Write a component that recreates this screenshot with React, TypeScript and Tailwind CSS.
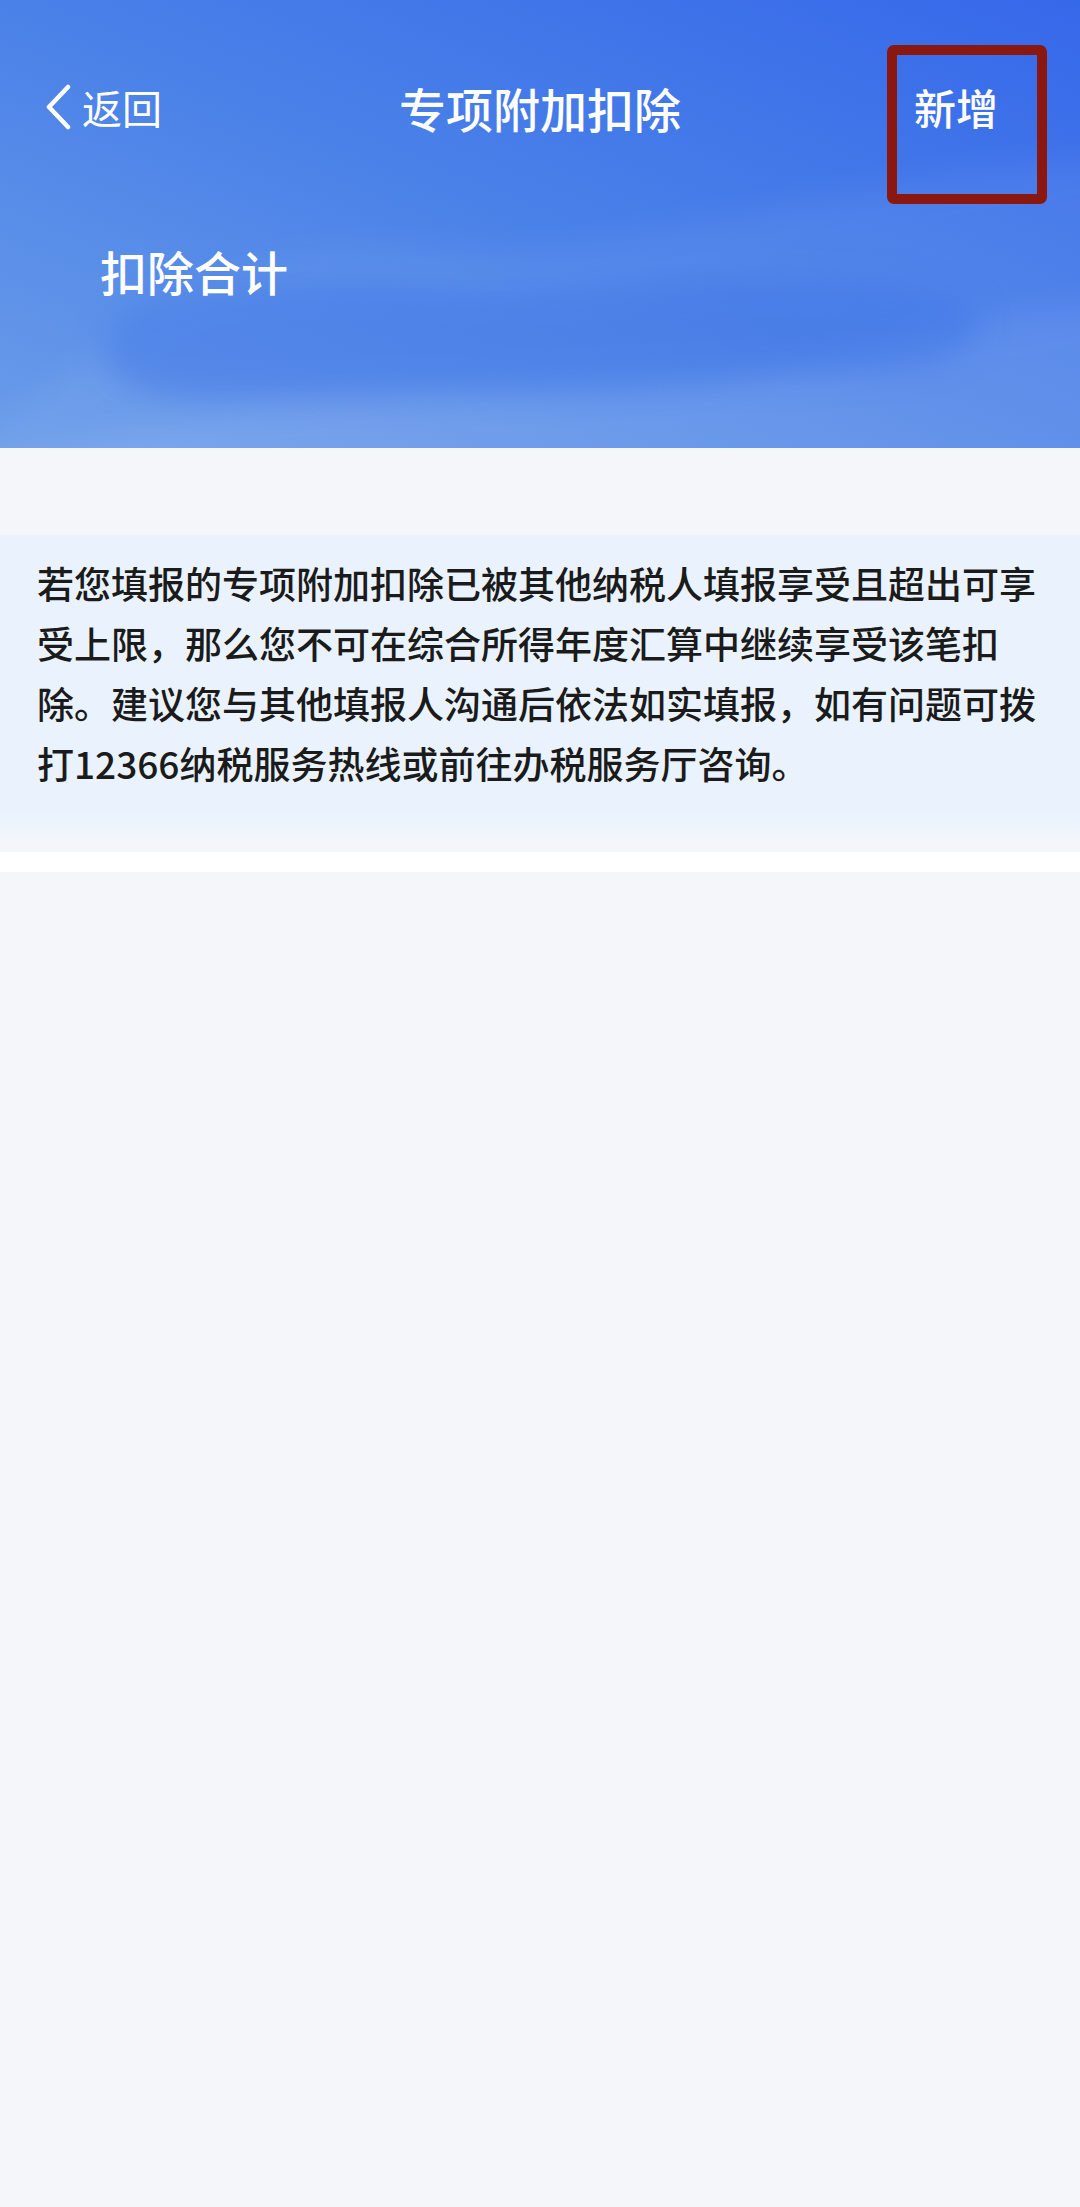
import React from 'react';

const FONT = '"Noto Sans CJK SC", "Noto Sans", sans-serif';

function HeaderWaves() {
    // soft background waves behind the header content
    return (
        <svg
            className="absolute inset-0 w-full h-full"
            viewBox="0 0 1080 448"
            preserveAspectRatio="none"
        >
            <defs>
                <linearGradient id="hdr" x1="1" y1="0" x2="0" y2="1">
                    <stop offset="0" stopColor="#3668ea" />
                    <stop offset="0.5" stopColor="#4a81e8" />
                    <stop offset="1" stopColor="#6a9ce9" />
                </linearGradient>
                <filter id="soft" x="-50%" y="-50%" width="200%" height="200%">
                    <feGaussianBlur stdDeviation="16" />
                </filter>
            </defs>
            <rect width="1080" height="448" fill="url(#hdr)" />
            <path
                d="M-60 470 C120 340 220 230 420 250 C600 270 760 190 1140 150 L1140 500 L-60 500 Z"
                fill="#ffffff"
                opacity="0.06"
                filter="url(#soft)"
            />
            <path
                d="M-60 500 C140 410 300 380 520 395 C720 410 880 320 1140 300 L1140 500 Z"
                fill="#ffffff"
                opacity="0.07"
                filter="url(#soft)"
            />
            <path
                d="M110 330 C140 290 260 270 420 285 C600 300 780 250 960 300 C1010 330 960 370 860 372 C640 378 420 400 220 398 C120 396 90 370 110 330 Z"
                fill="#3f76e6"
                opacity="0.5"
                filter="url(#soft)"
            />
        </svg>
    );
}

export default function App() {
    return (
        <div className="min-h-screen bg-[#f5f6fa]" style={{ fontFamily: FONT }}>
            {/* Blue header */}
            <div className="relative h-[448px] overflow-hidden text-white">
                <HeaderWaves />
                <div className="relative flex items-center justify-between h-[214px]">
                    <div className="flex items-center w-[300px] pl-[44px]">
                        <svg width="28" height="46" viewBox="0 0 28 46" className="mr-[10px]">
                            <path d="M24 3 L5 23 L24 43" fill="none" stroke="#ffffff" strokeWidth="4.5" strokeLinecap="round" strokeLinejoin="round" />
                        </svg>
                        <span className="text-[40px] leading-none">返回</span>
                    </div>
                    <div className="text-[47px] leading-none font-medium">专项附加扣除</div>
                    <div className="w-[300px] flex justify-end pr-[82px]">
                        <span className="text-[42px] leading-none font-medium">新增</span>
                    </div>
                </div>
                <div className="relative pl-[100px] mt-[33px] text-[47px] leading-none font-medium">扣除合计</div>
                {/* red annotation frame */}
                <div className="absolute left-[887px] top-[45px] w-[160px] h-[159px] border-[10px] border-[#8b1711] rounded-[7px]" />
            </div>

            {/* Notice */}
            <div className="h-[87px]" />
            <div className="bg-[#eaf3fd] px-[37px] pt-[18px] pb-[20px]">
                <p className="text-[37px] leading-[60px] text-[#1b1b1b] font-medium">
                    若您填报的专项附加扣除已被其他纳税人填报享受且超出可享受上限，那么您不可在综合所得年度汇算中继续享受该笔扣除。建议您与其他填报人沟通后依法如实填报，如有问题可拨打12366纳税服务热线或前往办税服务厅咨询。
                </p>
            </div>
            <div className="h-[32px] bg-gradient-to-b from-[#eaf3fd] to-[#f5f6fa]" />
            <div className="h-[7px]" />
            <div className="h-[20px] bg-white" />
        </div>
    );
}
